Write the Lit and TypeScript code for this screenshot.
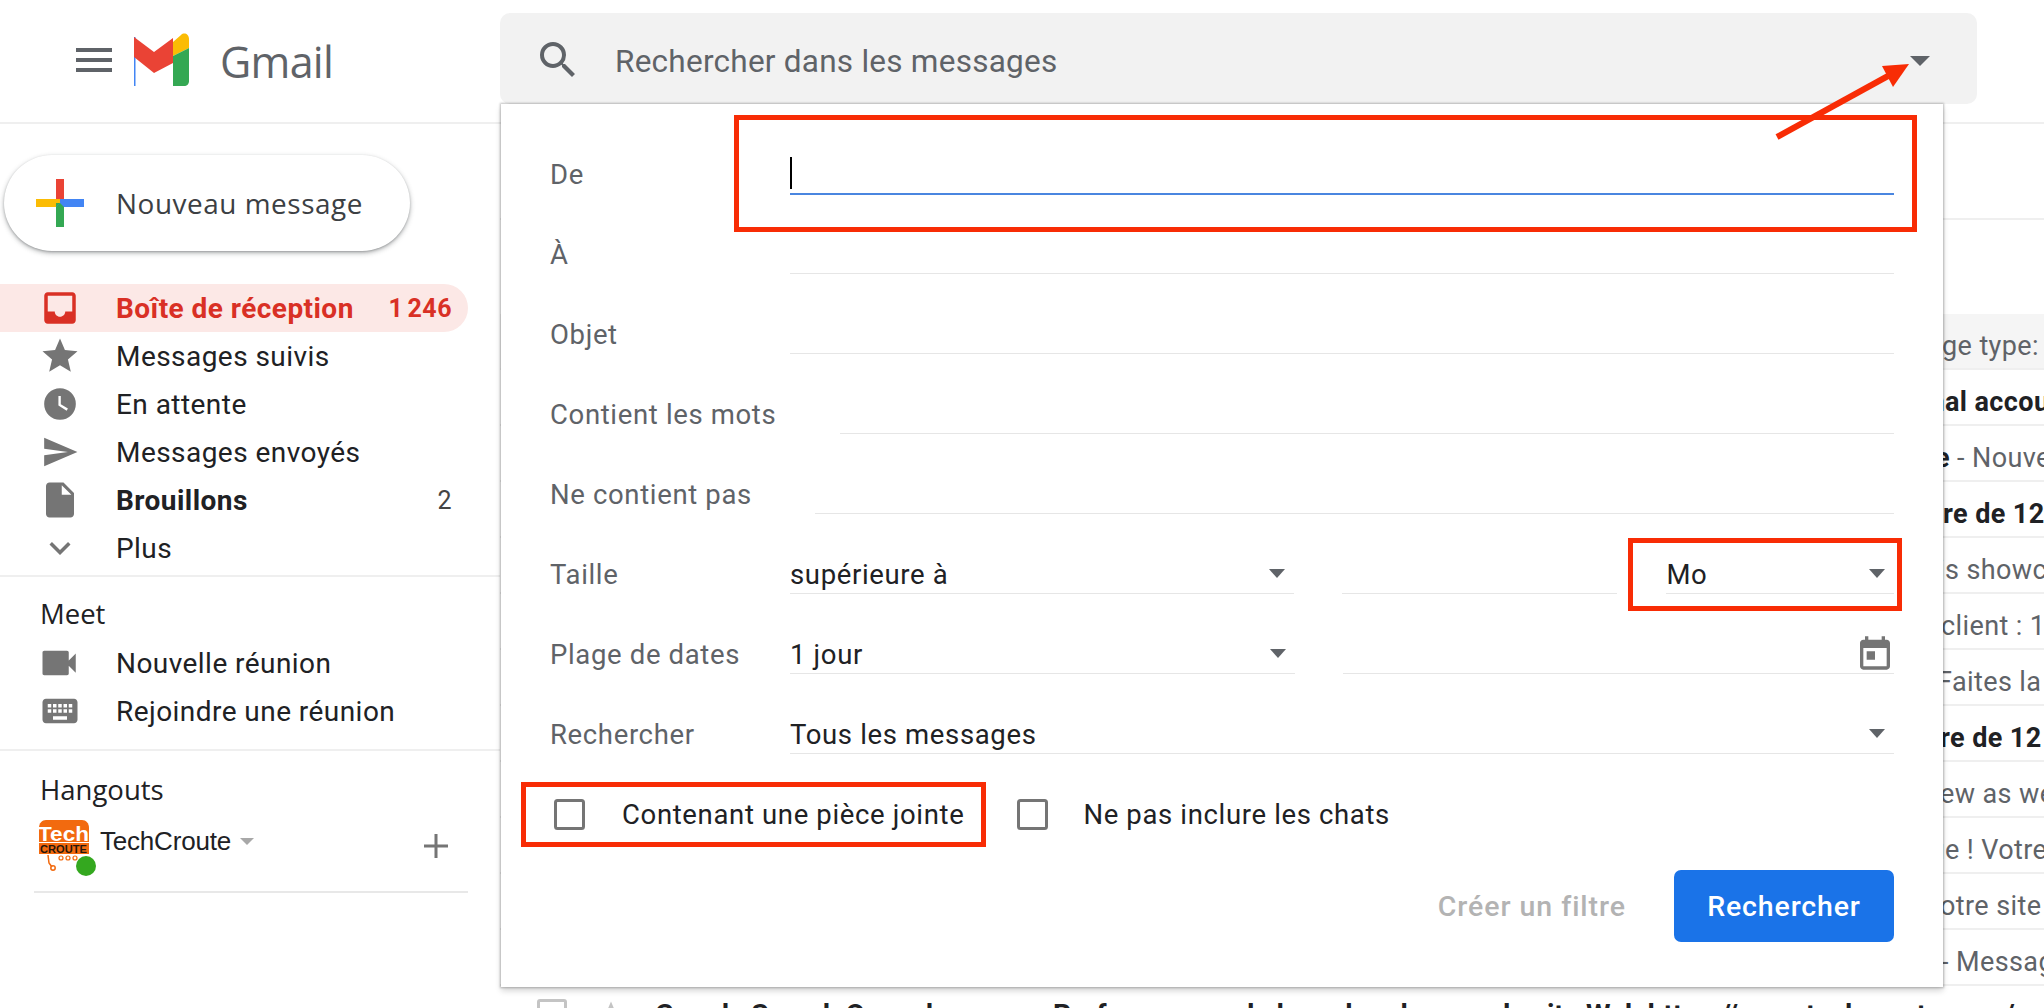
import { LitElement, html, css } from "lit";
import { customElement } from "lit/decorators.js";

const ic = (d: string, vb = "0 0 24 24") => html`<svg class="ic" viewBox=${vb}><path d=${d} fill="currentColor"></path></svg>`;

const ICONS: Record<string, string> = {
  inbox: "M19 3H5c-1.1 0-2 .9-2 2v14c0 1.1.9 2 2 2h14c1.1 0 2-.9 2-2V5c0-1.1-.9-2-2-2zm0 11h-4c0 1.66-1.34 3-3 3s-3-1.34-3-3H5V5h14v9z",
  star: "M12 17.27L18.18 21l-1.64-7.03L22 9.24l-7.19-.61L12 2 9.19 8.63 2 9.24l5.46 4.73L5.82 21z",
  clock: "M12 2a10 10 0 1 0 0 20 10 10 0 0 0 0-20zm4.2 14.2L11 13V7h1.5v5.2l4.5 2.7-.8 1.3z",
  send: "M2 21l21-9L2 3v7l15 2-15 2z",
  draft: "M6 2c-1.1 0-2 .9-2 2v16c0 1.1.9 2 2 2h12c1.1 0 2-.9 2-2V8l-6-6H6zm7 7V3.5L18.5 9H13z",
  chev: "M7.41 8.59L12 13.17l4.59-4.58L18 10l-6 6-6-6z",
  video: "M17 10.5V6c0-.55-.45-1-1-1H3c-.55 0-1 .45-1 1v12c0 .55.45 1 1 1h13c.55 0 1-.45 1-1v-4.5l4 4v-11l-4 4z",
  keyboard: "M20 5H4c-1.1 0-2 .9-2 2v10c0 1.1.9 2 2 2h16c1.1 0 2-.9 2-2V7c0-1.1-.9-2-2-2zm-9 3h2v2h-2V8zm0 3h2v2h-2v-2zM8 8h2v2H8V8zm0 3h2v2H8v-2zm-1 2H5v-2h2v2zm0-3H5V8h2v2zm9 7H8v-2h8v2zm0-4h-2v-2h2v2zm0-3h-2V8h2v2zm3 3h-2v-2h2v2zm0-3h-2V8h2v2z",
  search: "M15.5 14h-.79l-.28-.27A6.47 6.47 0 0 0 16 9.5 6.5 6.5 0 1 0 9.5 16c1.61 0 3.09-.59 4.23-1.57l.27.28v.79l5 4.99L20.49 19l-4.99-5zm-6 0C7.01 14 5 11.99 5 9.5S7.01 5 9.5 5 14 7.01 14 9.5 11.99 14 9.5 14z",
  cal: "M19 4h-1V2h-2v2H8V2H6v2H5c-1.1 0-2 .9-2 2v14c0 1.1.9 2 2 2h14c1.1 0 2-.9 2-2V6c0-1.1-.9-2-2-2zm0 16H5V9h14v11zM7 11h5v5H7z",
};

const NAV = [
  { icon: "inbox", label: "Boîte de réception", count: "1 246", cls: "active" },
  { icon: "star", label: "Messages suivis" },
  { icon: "clock", label: "En attente", small: true },
  { icon: "send", label: "Messages envoyés", small: true },
  { icon: "draft", label: "Brouillons", count: "2", cls: "bold" },
  { icon: "chev", label: "Plus" },
];

/* pre = hidden under the panel, x = where the visible part starts */
const ROWS = [
  { pre: "Messa", text: "ge type:", x: 1942, grey: true },
  { pre: "Person", text: "al account", x: 1945, bold: true },
  { pre: "Bienvenue", text: "", tail: "\u00a0- Nouveau", x: 1950, bold: true },
  { pre: "Mise à jou", text: "re de 12", x: 1943, bold: true },
  { pre: "This i", text: "s showcase", x: 1945 },
  { pre: "Votre ", text: "client : 1", x: 1941 },
  { pre: "Bienvenue ! ", text: "Faites la", x: 1937 },
  { pre: "Mise à jou", text: "re de 12", x: 1940, bold: true },
  { pre: "Previ", text: "ew as web", x: 1940 },
  { pre: "Bienvenu", text: "e ! Votre", x: 1945 },
  { pre: "Pour v", text: "otre site", x: 1940 },
  { pre: "Info ", text: "- Message", x: 1941 },
];

@customElement("app-root")
export class AppRoot extends LitElement {
  static styles = css`
    :host { display: block; width: 2044px; height: 1008px; position: relative; overflow: hidden; background: #fff; font-family: Roboto, "Liberation Sans", sans-serif; color: #202124; }
    .ic { width: 100%; height: 100%; display: block; }
    header { height: 122px; border-bottom: 2px solid #efefef; display: flex; align-items: center; position: relative; }
    .menu { width: 36px; height: 24px; margin-left: 76px; margin-top: -2px; display: flex; flex-direction: column; justify-content: space-between; flex: none; }
    .menu i { display: block; height: 4px; background: #5f6368; }
    .logo { width: 56px; height: 54px; margin-left: 22px; margin-top: -2px; flex: none; }
    .brand { font-family: "Open Sans", sans-serif; font-size: 43px; color: #5f6368; margin-left: 30px; letter-spacing: -.7px; }
    .search { position: absolute; left: 500px; top: 13px; width: 1477px; height: 91px; border-radius: 10px; background: #f2f2f2; display: flex; align-items: center; }
    .search .sic { width: 48px; height: 48px; margin-left: 34px; margin-top: 3px; color: #5f6368; flex: none; }
    .search span { margin-left: 33px; margin-top: 6px; font-size: 31.5px; color: #5f6368; letter-spacing: .25px; }
    .search .tri { position: absolute; left: 1410px; top: 43px; width: 0; height: 0; border: 10px solid transparent; border-top: 10px solid #5f6368; border-bottom: 0; }
    main { display: flex; height: 884px; }
    aside { width: 500px; flex: none; position: relative; }
    .compose { margin: 31px 0 0 4px; width: 406px; height: 96px; border-radius: 48px; background: #fff; box-shadow: 0 2px 5px rgba(60,64,67,.4), 0 1px 2px rgba(60,64,67,.25); display: flex; align-items: center; }
    .compose svg { width: 48px; height: 48px; margin-left: 32px; }
    .compose span { margin-left: 32px; letter-spacing: .55px; font-family: "Open Sans", Roboto, sans-serif; font-size: 27.9px; color: #3c4043; }
    nav { margin-top: 33px; width: 468px; }
    .item { height: 48px; display: flex; align-items: center; padding-right: 16px; font-size: 28px; letter-spacing: .45px; color: #202124; }
    .item .i { width: 42px; height: 42px; margin-left: 39px; color: #757575; flex: none; }
    .item .i.small { width: 38px; height: 38px; margin-left: 41px; margin-right: 2px; }
    .item .l { margin-left: 35px; flex: 1; }
    .item .c { font-size: 25px; color: #444; letter-spacing: .5px; word-spacing: -2.5px; }
    .item.active { background: #fce8e6; border-radius: 0 24px 24px 0; color: #d93025; font-weight: 700; }
    .item.active .i, .item.active .c { color: #d93025; font-weight: 700; }
    .item.bold { font-weight: 700; }
    .item.bold .c { font-weight: 400; }
    .sec { border-top: 2px solid #efefef; width: 500px; box-sizing: border-box; }
    nav + .sec { margin-top: 3px; }
    .sec h3 { margin: 0; font-family: "Open Sans", sans-serif; font-weight: 400; font-size: 27.5px; padding-left: 40px; color: #202124; height: 40px; line-height: 40px; }
    .meet { padding-top: 17px; height: 174px; }
    .meet h3 { margin-bottom: 5px; }
    .hang { padding-top: 19px; }
    .user { display: flex; align-items: flex-start; height: 81px; margin-left: 34px; width: 434px; border-bottom: 2px solid #e8e8e8; position: relative; }
    .av { width: 52px; height: 54px; margin-left: 4px; margin-top: 10px; flex: none; }
    .dot { position: absolute; left: 42px; top: 46px; width: 20px; height: 20px; border-radius: 50%; background: #34a81f; }
    .un { font-family: "Liberation Sans", sans-serif; font-size: 26px; margin-left: 10px; margin-top: 16px; color: #202124; letter-spacing: -.2px; }
    .car { width: 0; height: 0; border: 7px solid transparent; border-top: 7px solid #a8a8a8; border-bottom: 0; margin: 28px 0 0 9px; }
    .plus { position: absolute; left: 390px; top: 24px; width: 24px; height: 24px; }
    .content { flex: 1; position: relative; min-width: 0; }
    .top1 { height: 94px; border-bottom: 2px solid #efefef; }
    .top2 { height: 94px; }
    .row { height: 56px; box-sizing: border-box; border-bottom: 2px solid #efefef; padding-top: 9px; display: flex; align-items: center; white-space: nowrap; font-size: 27px; color: #5f6368; letter-spacing: .4px; overflow: hidden; }
    .row.grey { background: #f5f5f5; }
    .row .pre { flex: none; text-align: right; overflow: hidden; white-space: nowrap; display: block; }
    .row .b { color: #202124; font-weight: 700; }
    .last { height: 56px; display: flex; align-items: center; white-space: nowrap; font-size: 28px; font-weight: 700; color: #202124; position: relative; }
    .chk0 { width: 30px; height: 30px; border: 3px solid #c4c4c4; border-radius: 3px; box-sizing: border-box; margin-left: 37px; flex: none; }
    .st0 { width: 30px; height: 30px; margin-left: 29px; color: #c4c4c4; flex: none; }
    .last .a { margin-left: 29px; width: 398px; flex: none; overflow: hidden; }
    .panel { position: absolute; left: 501px; top: 104px; width: 1442px; height: 883px; box-sizing: border-box; background: #fff; box-shadow: 0 0 2px 1px rgba(0,0,0,.24), 0 4px 6px rgba(0,0,0,.16); padding: 51px 49px 0 49px; font-size: 27.5px; letter-spacing: .65px; }
    .f { height: 80px; display: flex; align-items: flex-start; }
    .f label { color: #5f6368; flex: none; height: 38px; line-height: 40px; white-space: nowrap; }
    .w240 { width: 240px; }
    .w290 { width: 290px; }
    .w265 { width: 265px; }
    .ln { border-bottom: 1.5px solid #e6e6e6; height: 38px; display: flex; align-items: center; color: #202124; position: relative; }
    .ln.grow { flex: 1; }
    .ln.focus { border-bottom: 2px solid #4a86e0; }
    .ln.sel { width: 505px; }
    .ln.num { width: 276px; margin-left: 48px; }
    .ln.unit { width: 228px; margin-left: 49px; }
    .ln.date { margin-left: 48px; }
    .caret { width: 2px; height: 32px; background: #000; margin-top: -2px; }
    .tri2 { position: absolute; right: 9px; top: 14px; width: 0; height: 0; border: 8px solid transparent; border-top: 9px solid #5f6368; border-bottom: 0; }
    .calic { position: absolute; right: -1px; top: -2px; width: 40px; height: 40px; color: #757575; }
    .checks { display: flex; align-items: center; height: 80px; margin-top: -21px; padding-left: 4px; }
    .cb { width: 31px; height: 31px; box-sizing: border-box; border: 3.5px solid #757575; border-radius: 3.5px; flex: none; }
    .cb.second { margin-left: 53px; }
    .cb.second + span { margin-left: 35px; }
    .checks span { margin-left: 37px; color: #202124; white-space: nowrap; }
    .acts { display: flex; justify-content: flex-end; align-items: center; margin-top: 16px; font-size: 28.5px; }
    .flt { color: #b3b3b3; font-weight: 500; margin-right: 48px; letter-spacing: .95px; }
    .go { width: 220px; height: 72px; background: #1a73e8; border-radius: 7px; color: #fff; display: flex; align-items: center; justify-content: center; font-weight: 500; letter-spacing: .85px; }
    .box { position: absolute; border: 5px solid #f82c05; box-sizing: border-box; }
    .b1 { left: 734px; top: 115px; width: 1183px; height: 117px; }
    .b2 { left: 1628px; top: 538px; width: 274px; height: 73px; }
    .b3 { left: 521px; top: 782px; width: 465px; height: 65px; }
    .arrow { position: absolute; left: 1760px; top: 50px; width: 160px; height: 100px; }
  `;

  private gmail() {
    return html`<svg class="logo" viewBox="0 0 56 54">
      <rect x="0" y="4" width="1.5" height="49" fill="#4285f4"></rect>
      <path d="M0 4 L20 19 L39 5 V30 L20 40 L0 24 Z" fill="#ea4335"></path>
      <path d="M39 9 L47 2 C50 -1 55 1 55 6 V15 L39 23 Z" fill="#fbbc04"></path>
      <path d="M39 23 L55 15 V48 C55 51 53 53 50 53 H39 Z" fill="#34a853"></path>
    </svg>`;
  }

  private plus() {
    return html`<svg viewBox="0 0 48 48">
      <rect x="20" y="0" width="8" height="24" fill="#ea4335"></rect>
      <rect x="0" y="20" width="24" height="8" fill="#fbbc04"></rect>
      <rect x="20" y="24" width="8" height="24" fill="#34a853"></rect>
      <rect x="24" y="20" width="24" height="8" fill="#4285f4"></rect>
      <path d="M20 28 L28 20 V28 Z" fill="#4285f4"></path>
      <path d="M20 28 L24 24 L28 28 Z" fill="#34a853"></path>
    </svg>`;
  }

  private avatar() {
    return html`<svg class="av" viewBox="0 0 52 54">
      <path d="M8 0 H44 C48 0 51 3 51 8 V34 H1 V8 C1 3 4 0 8 0 Z" fill="#f26a0f"></path>
      <rect x="0" y="22" width="52" height="1" fill="#fff"></rect>
      <text x="0" y="21" font-family="Liberation Sans" font-weight="700" font-size="21" fill="#fff" textLength="51" lengthAdjust="spacingAndGlyphs">Tech</text>
      <text x="2" y="33" font-family="Liberation Sans" font-weight="700" font-size="10.5" fill="#26160b" textLength="47" lengthAdjust="spacingAndGlyphs">CROUTE</text>
      <path d="M10 35 L11 43 L14 47" stroke="#f26a0f" stroke-width="1.5" fill="none"></path>
      <circle cx="15" cy="48" r="2.2" stroke="#f26a0f" stroke-width="1.5" fill="none"></circle>
      <circle cx="23" cy="38" r="2" stroke="#f26a0f" stroke-width="1.2" fill="none"></circle>
      <circle cx="30" cy="38" r="2" stroke="#f26a0f" stroke-width="1.2" fill="none"></circle>
      <circle cx="37" cy="38" r="2" stroke="#f26a0f" stroke-width="1.2" fill="none"></circle>
    </svg>`;
  }

  render() {
    return html`
      <header>
        <div class="menu"><i></i><i></i><i></i></div>
        ${this.gmail()}
        <div class="brand">Gmail</div>
        <div class="search">
          <div class="sic">${ic(ICONS.search)}</div>
          <span>Rechercher dans les messages</span>
          <div class="tri"></div>
        </div>
      </header>
      <main>
        <aside>
          <div class="compose">${this.plus()}<span>Nouveau message</span></div>
          <nav>
            ${NAV.map((n) => html`<div class="item ${n.cls ?? ""}">
              <div class="i ${n.small ? "small" : ""}">${ic(ICONS[n.icon])}</div>
              <div class="l">${n.label}</div>
              ${n.count ? html`<div class="c">${n.count}</div>` : ""}
            </div>`)}
          </nav>
          <div class="sec meet">
            <h3>Meet</h3>
            <div class="item"><div class="i">${ic(ICONS.video)}</div><div class="l">Nouvelle réunion</div></div>
            <div class="item"><div class="i">${ic(ICONS.keyboard)}</div><div class="l">Rejoindre une réunion</div></div>
          </div>
          <div class="sec hang">
            <h3>Hangouts</h3>
            <div class="user">
              ${this.avatar()}
              <div class="dot"></div>
              <div class="un">TechCroute</div>
              <div class="car"></div>
              <svg class="plus" viewBox="0 0 24 24"><path d="M10.5 0h3v10.5H24v3H13.5V24h-3V13.5H0v-3h10.5z" fill="#757575"></path></svg>
            </div>
          </div>
        </aside>
        <section class="content">
          <div class="top1"></div>
          <div class="top2"></div>
          ${ROWS.map((r) => html`<div class="row ${r.grey ? "grey" : ""}">
            <span class="pre ${r.bold ? "b" : ""}" style="width:${r.x - 500}px">${r.pre}</span>
            <span class=${r.bold ? "b" : ""}>${r.text}</span>${r.tail ? html`<span>${r.tail}</span>` : ""}
          </div>`)}
          <div class="last">
            <div class="chk0"></div>
            <div class="st0">${ic(ICONS.star)}</div>
            <div class="a">Google Search Console</div>
            <div>Performances de la recherche pour le site Web https://www.techcroute.com/</div>
          </div>
        </section>
      </main>

      <div class="panel">
        <div class="f"><label class="w240">De</label><div class="ln grow focus"><div class="caret"></div></div></div>
        <div class="f"><label class="w240">À</label><div class="ln grow"></div></div>
        <div class="f"><label class="w240">Objet</label><div class="ln grow"></div></div>
        <div class="f"><label class="w290">Contient les mots</label><div class="ln grow"></div></div>
        <div class="f"><label class="w265">Ne contient pas</label><div class="ln grow"></div></div>
        <div class="f">
          <label class="w240">Taille</label>
          <div class="ln sel">supérieure à<div class="tri2"></div></div>
          <div class="ln num"></div>
          <div class="ln unit">Mo<div class="tri2"></div></div>
        </div>
        <div class="f">
          <label class="w240">Plage de dates</label>
          <div class="ln sel">1 jour<div class="tri2"></div></div>
          <div class="ln grow date"><div class="calic">${ic(ICONS.cal)}</div></div>
        </div>
        <div class="f">
          <label class="w240">Rechercher</label>
          <div class="ln grow">Tous les messages<div class="tri2"></div></div>
        </div>
        <div class="checks">
          <div class="cb"></div><span>Contenant une pièce jointe</span>
          <div class="cb second"></div><span>Ne pas inclure les chats</span>
        </div>
        <div class="acts"><div class="flt">Créer un filtre</div><div class="go">Rechercher</div></div>
      </div>

      <div class="box b1"></div>
      <div class="box b2"></div>
      <div class="box b3"></div>
      <svg class="arrow" viewBox="0 0 160 100">
        <path d="M17 87 L128 26" stroke="#f82c05" stroke-width="6" fill="none"></path>
        <path d="M149 14 L122 16 L133 37 Z" fill="#f82c05"></path>
      </svg>
    `;
  }
}
